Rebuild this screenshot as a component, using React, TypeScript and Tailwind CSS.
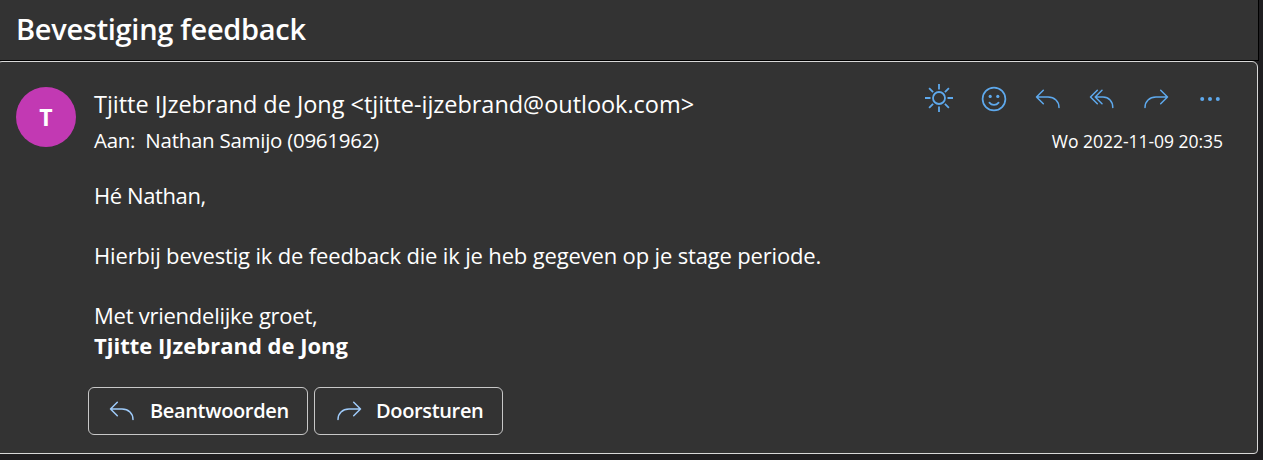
import React from "react";

type IconProps = { className?: string };

const stroke = {
  fill: "none",
  stroke: "currentColor",
  strokeWidth: 1.5,
  strokeLinecap: "round" as const,
  strokeLinejoin: "round" as const,
};

const Sun = () => (
  <svg width="30" height="30" viewBox="0 0 30 30" {...stroke} strokeWidth={1.8} strokeLinecap="butt">
    <circle cx="15" cy="15" r="6" />
    <path d="M15 1v5.5M15 23.5v5.5M1 15h5.5M23.5 15h5.5M5.1 5.1l4 4M20.9 20.9l4 4M5.1 24.9l4-4M20.9 9.1l4-4" />
  </svg>
);

const Smile = () => (
  <svg width="26" height="26" viewBox="0 0 26 26" {...stroke} strokeWidth={1.7}>
    <circle cx="13" cy="13" r="11.4" />
    <path d="M8.4 16.6c2.3 2.9 6.9 2.9 9.2 0" />
    <circle cx="9.2" cy="10.4" r="1.6" fill="currentColor" stroke="none" />
    <circle cx="16.8" cy="10.4" r="1.6" fill="currentColor" stroke="none" />
  </svg>
);

const Reply = ({ className }: IconProps) => (
  <svg className={className} width="26" height="20" viewBox="0 0 26 20" {...stroke}>
    <path d="M8.3 1.2L1.5 8l6.8 6.8M1.5 8h11.5c6.6 0 11 4.3 11 10.5" />
  </svg>
);

const ReplyAll = () => (
  <svg width="26" height="20" viewBox="0 0 26 20" {...stroke}>
    <path d="M8.3 1.2L1.5 8l6.8 6.8M13 1.2L6.2 8l6.8 6.8M6.2 8H14c5.8 0 9.8 4.3 9.8 10.5" />
  </svg>
);

const Forward = ({ className }: IconProps) => (
  <svg className={className} width="26" height="20" viewBox="0 0 26 20" {...stroke}>
    <path d="M17.7 1.2L24.5 8l-6.8 6.8M24.5 8H13C6.4 8 2 12.3 2 18.5" />
  </svg>
);

const More = () => (
  <svg width="22" height="6" viewBox="0 0 22 6" fill="currentColor">
    <circle cx="3.2" cy="3" r="2" />
    <circle cx="11" cy="3" r="2" />
    <circle cx="18.8" cy="3" r="2" />
  </svg>
);

export default function App() {
  return (
    <div className="h-[460px] w-[1263px] overflow-hidden whitespace-nowrap bg-[#1f1e20] font-['Open_Sans','Noto_Sans',sans-serif] text-white">
      <header className="h-[61px] w-[1259px] border-r border-b border-black bg-[#333333] pl-4">
        <h1 className="text-[29px] leading-[58px] font-semibold tracking-[-0.3px]">
          <span>Bevestiging feedback</span>
        </h1>
      </header>
      <main className="-ml-1 flex h-[393px] w-[1262px] rounded-t-md rounded-b-sm border border-[#d8d8d8] bg-[#333333] pl-[19px]">
        <div className="mt-[25px] flex size-[60px] shrink-0 items-center justify-center rounded-full bg-[#c239b3] text-[23px] font-bold">
          <span className="pt-px">T</span>
        </div>
        <div className="ml-[18px] min-w-0 flex-1">
          <div className="flex justify-between">
            <div className="pt-[24px]">
              <div className="h-9 text-[23.5px] leading-9 tracking-[-0.03px]"><span>Tjitte IJzebrand de Jong &lt;tjitte-ijzebrand@outlook.com&gt;</span></div>
              <div className="h-9 text-[20.5px] leading-9 tracking-[-0.27px]"><span>Aan:&nbsp; Nathan Samijo (0961962)</span></div>
            </div>
            <div className="pr-[34px]">
              <div className="mt-[20px] flex h-8 items-center justify-end pr-[2px] text-[#5ea9ed]">
                <Sun />
                <div className="ml-[27px] pt-[2px]"><Smile /></div>
                <div className="ml-[28px] pt-[2px]"><Reply /></div>
                <div className="ml-[28px] pt-[2px]"><ReplyAll /></div>
                <div className="ml-[28px] pt-[2px]"><Forward /></div>
                <div className="ml-[30px] pt-[2px]"><More /></div>
              </div>
              <div className="mt-[9px] text-right text-[17.5px] leading-9 tracking-[-0.03px]"><span>Wo 2022-11-09 20:35</span></div>
            </div>
          </div>
          <div className="mt-[21px] text-[22px] leading-[30px] tracking-[-0.16px]">
            <p className="tracking-[-0.4px]"><span>Hé Nathan,</span></p>
            <p className="mt-[30px]"><span>Hierbij bevestig ik de feedback die ik je heb gegeven op je stage periode.</span></p>
            <p className="mt-[30px] tracking-[-0.25px]"><span>Met vriendelijke groet,</span></p>
            <p className="font-bold tracking-[0px]"><span>Tjitte IJzebrand de Jong</span></p>
          </div>
          <div className="mt-[27px] -ml-[6px] flex gap-[6px] text-[20px] font-semibold tracking-[-0.35px]">
            <button className="flex h-12 w-[220px] items-center rounded-md border border-[#c8c8c8] pl-5">
              <Reply className="shrink-0 text-[#9fcbfa]" />
              <span className="ml-[15px]">Beantwoorden</span>
            </button>
            <button className="flex h-12 w-[189px] items-center rounded-md border border-[#c8c8c8] pl-[21px]">
              <Forward className="shrink-0 text-[#9fcbfa]" />
              <span className="ml-[14px]">Doorsturen</span>
            </button>
          </div>
        </div>
      </main>
    </div>
  );
}
